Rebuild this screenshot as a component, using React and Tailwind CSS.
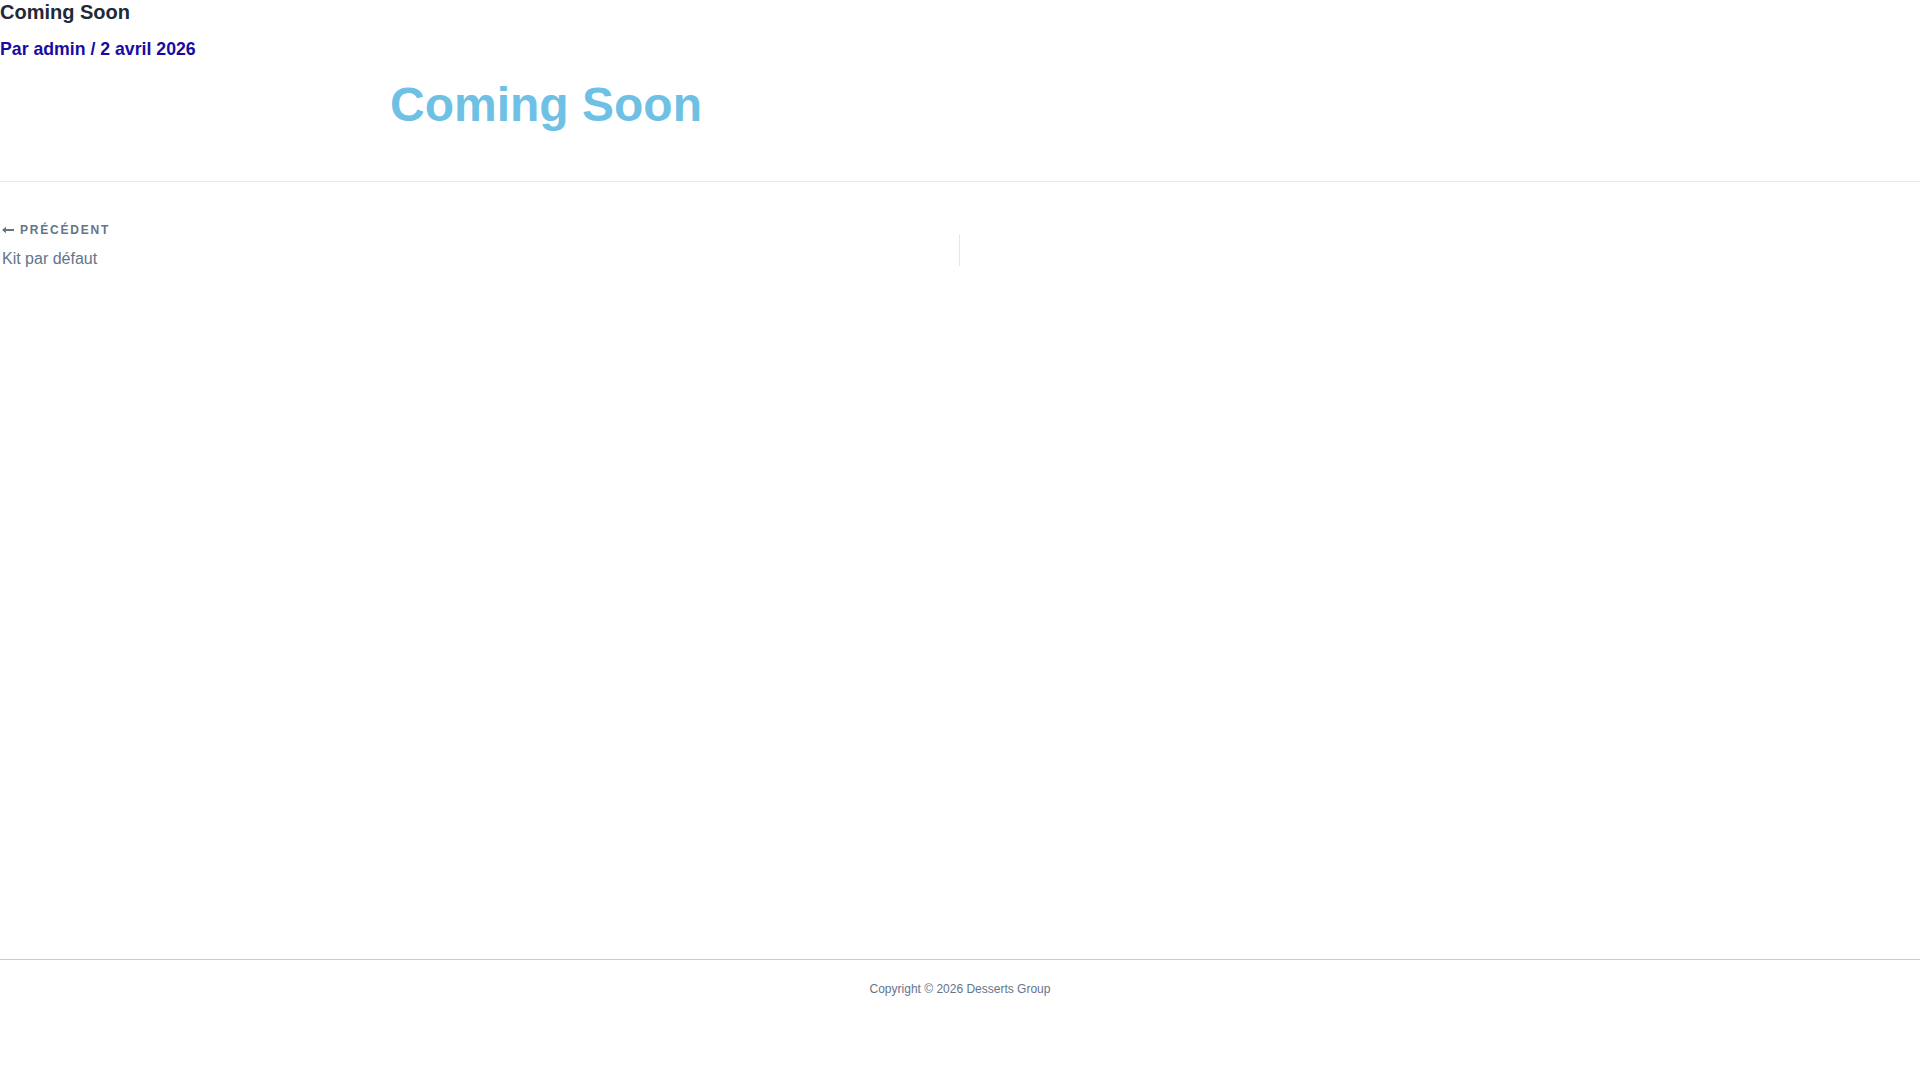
const ArrowLeft = () => (
  <svg width="12" height="8" viewBox="0 0 12 8" className="shrink-0" aria-hidden="true">
    <path d="M12 4H2" stroke="currentColor" strokeWidth="2" />
    <path d="M0 4L4 0.8V7.2Z" fill="currentColor" />
  </svg>
);

export default function App() {
  return (
    <div className="min-h-screen bg-white font-['Liberation_Sans',Arial,sans-serif]">
      <main className="min-h-[959px]">
        <h1 className="text-[20px] font-bold leading-[24px] text-[#1f2937]">Coming Soon</h1>
        <p className="mt-[11px] text-[17.7px] font-bold leading-[28px] text-[#1a0ca1]">
          Par admin / 2 avril 2026
        </p>

        <div className="mx-auto mt-[13px] w-[1140px]">
          <h2 className="text-[48px] font-bold leading-[58px] text-[#6ec1e4]">Coming Soon</h2>
        </div>

        <div className="mt-[47px] border-t border-[#e5e7eb]" />

        <nav className="flex pt-[39px]">
          <div className="w-[959px] pl-[2px]">
            <div className="flex items-center gap-[6px] text-[12px] font-bold uppercase leading-[18px] tracking-[0.15em] text-[#64748b]">
              <ArrowLeft />
              <span>Précédent</span>
            </div>
            <div className="mt-[8px] text-[16px] leading-[24px] text-[#64748b]">Kit par défaut</div>
          </div>
          <div className="mt-[13px] h-[32px] w-px bg-[#e5e7eb]" />
          <div className="flex-1" />
        </nav>
      </main>

      <footer className="border-t border-[#fac864] pt-[20px] pb-[40px]">
        <p className="text-center text-[12px] leading-[18px] text-[#64748b]">
          Copyright © 2026 Desserts Group
        </p>
      </footer>
    </div>
  );
}
